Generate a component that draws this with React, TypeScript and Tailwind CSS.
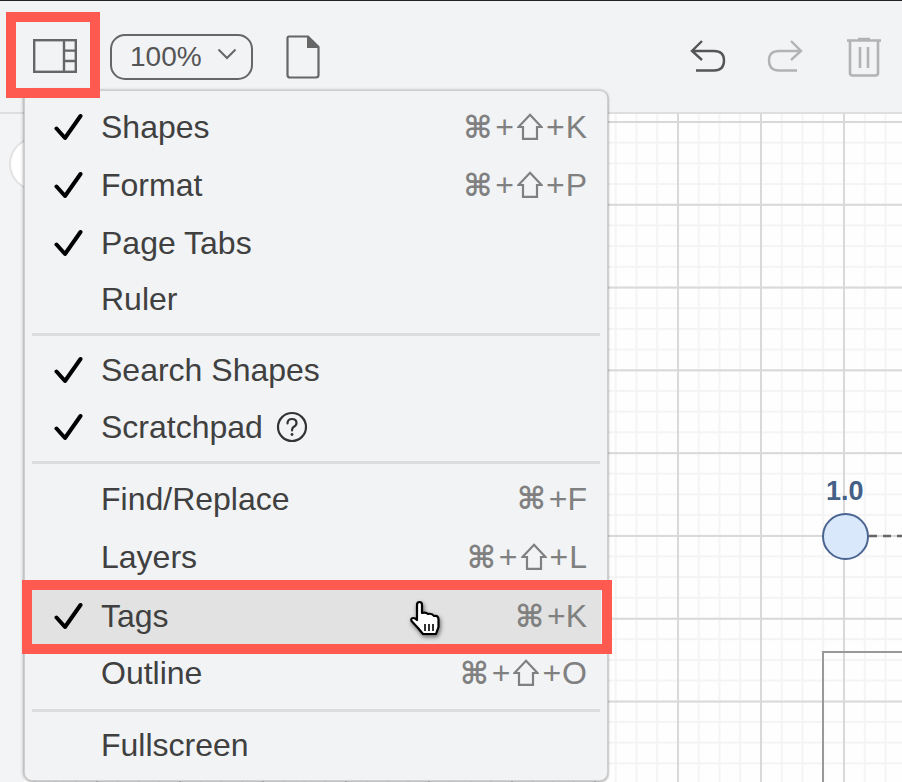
const Shift = () => (
  <svg width="26" height="27" viewBox="0 0 26 27" className="inline-block mx-[3px] -mt-[2px]" fill="none" stroke="#808080" strokeWidth="2.2" strokeLinejoin="miter">
    <path d="M13 1.8 L24.5 14 H20 V25.8 H6 V14 H1.5 Z" />
  </svg>
);

const Check = () => (
  <svg width="30" height="28" viewBox="0 0 30 28" fill="none" stroke="#000" strokeWidth="4" strokeLinecap="round" strokeLinejoin="round">
    <path d="M2.5 15.5 L11 25 L26.5 3" />
  </svg>
);

const Shortcut = ({ keys, shift }: { keys: string; shift?: boolean }) => (
  <span className="ml-auto flex items-center text-[#808080] text-[32px] leading-none">
    <span className="font-['DejaVu_Sans',sans-serif] text-[31px] font-bold">⌘</span>
    <span className="ml-[3px]">+</span>
    {shift && (
      <>
        <Shift />
        <span className="mr-px">+</span>
      </>
    )}
    <span>{keys}</span>
  </span>
);

const Row = ({
  label,
  checked,
  keys,
  shift,
  h,
  children,
}: {
  label: string;
  checked?: boolean;
  keys?: string;
  shift?: boolean;
  h: string;
  children?: React.ReactNode;
}) => (
  <div className={`flex items-center pl-[29px] pr-[20px] ${h}`}>
    <span className="w-[30px] h-7 shrink-0">{checked && <Check />}</span>
    <span className="ml-[17px] text-[32px] leading-none text-[#404040] whitespace-nowrap">{label}</span>
    {children}
    {keys && <Shortcut keys={keys} shift={shift} />}
  </div>
);

const Sep = ({ mt, mb }: { mt: string; mb: string }) => (
  <div className={`h-[3px] bg-[#dcdcdc] mx-[7px] ${mt} ${mb}`} />
);

export default function App() {
  return (
    <div className="relative w-[902px] h-[782px] overflow-hidden bg-white font-['Liberation_Sans',Arial,sans-serif]">
      <div className="h-px bg-[#222]" />
      {/* toolbar */}
      <div className="h-[113px] bg-[#f1f3f5] border-b-2 border-[#dedede] flex items-start">
        <svg width="44" height="34" viewBox="0 0 44 34" className="ml-[33px] mt-[38px] shrink-0" fill="none" stroke="#666" strokeWidth="2.4">
          <rect x="1.2" y="1.2" width="41.6" height="31.6" />
          <path d="M31 1.2 V32.8 M31 11.6 H42.8 M31 22 H42.8" />
        </svg>
        <div className="ml-[33px] mt-[33px] w-[143px] h-[46px] rounded-[15px] border-2 border-[#666] flex items-center pl-[18px] text-[28px] leading-none text-[#555]">
          100%
          <svg width="20" height="12" viewBox="0 0 20 12" className="ml-[15px] -mt-[6px]" fill="none" stroke="#666" strokeWidth="2">
            <path d="M1.5 1.5 L10 10 L18.5 1.5" />
          </svg>
        </div>
        <svg width="34" height="44" viewBox="0 0 34 44" className="ml-[33px] mt-[34px] shrink-0" fill="none">
          <path d="M3 1.5 H22 L32.5 12 V40 Q32.5 42.5 30 42.5 H4 Q1.5 42.5 1.5 40 V3 Q1.5 1.5 3 1.5 Z" stroke="#666" strokeWidth="2.2" />
          <path d="M21 1 L33 13 H21 Z" fill="#666" />
        </svg>
        <svg width="36" height="33" viewBox="0 0 36 33" className="ml-auto mt-[38px] shrink-0" fill="none" stroke="#555" strokeWidth="2.4">
          <path d="M12 2 L2 12 L12 21 M2 12 H24 Q34 12 34 21.5 Q34 31.5 24 31.5 H6" />
        </svg>
        <svg width="36" height="33" viewBox="0 0 36 33" className="ml-[41px] mt-[38px] shrink-0" fill="none" stroke="#b3b3b3" strokeWidth="2.4">
          <path d="M24 2 L34 12 L24 21 M34 12 H12 Q2 12 2 21.5 Q2 31.5 12 31.5 H30" />
        </svg>
        <svg width="36" height="40" viewBox="0 0 36 40" className="ml-[43px] mr-[20px] mt-[36px] shrink-0" fill="none" stroke="#b3b3b3" strokeWidth="2.6">
          <path d="M1 3.5 H35 M12 2 H24" />
          <path d="M4 3.5 V36 Q4 38.5 6.5 38.5 H29.5 Q32 38.5 32 36 V3.5" />
          <path d="M14 10 V31 M22 10 V31" />
        </svg>
      </div>
      {/* canvas */}
      <div className="relative h-[668px] bg-[#fefefe]">
        <div className="absolute inset-0 bg-[linear-gradient(#d9d9d9_2px,transparent_2px),linear-gradient(90deg,#d9d9d9_2px,transparent_2px),linear-gradient(#f4f4f4_2px,transparent_2px),linear-gradient(90deg,#f4f4f4_2px,transparent_2px)] bg-[size:82.8px_82.8px,83px_83px,20.7px_20.7px,20.75px_20.75px] [background-position:0_7px,13px_0,0_7px,13px_0]" />
        <div className="absolute left-0 top-0 w-6 h-[668px] bg-[#f3f4f6]" />
        <div className="absolute left-[9px] top-[23px] w-[54px] h-[54px] rounded-full bg-white border-2 border-[#e2e2e2]" />
        {/* diagram */}
        <div className="absolute left-[826px] top-[364px] text-[27px] leading-none font-bold text-[#456087]">1.0</div>
        <div className="absolute left-[822px] top-[399px] w-[47px] h-[47px] rounded-full bg-[#dae8fc] border-2 border-[#4a6591]" />
        <svg width="33" height="4" className="absolute left-[869px] top-[420px]">
          <line x1="0" y1="2" x2="33" y2="2" stroke="#666" strokeWidth="2.4" strokeDasharray="8 6" />
        </svg>
        <div className="absolute left-[822px] top-[537px] w-[90px] h-[140px] border-2 border-[#999]" />
      </div>

      {/* menu */}
      <div className="absolute left-[24px] top-[90px] w-[584px] h-[691px] bg-[#f1f3f5] rounded-[8px] border border-[#cfcfcf] shadow-[-1px_0_3px_rgba(0,0,0,0.3),1px_1px_2px_rgba(0,0,0,0.2)] pt-[7px]">
        <Row h="h-[58px]" label="Shapes" checked keys="K" shift />
        <Row h="h-[58px]" label="Format" checked keys="P" shift />
        <Row h="h-[57px]" label="Page Tabs" checked />
        <Row h="h-[56px]" label="Ruler" />
        <Sep mt="mt-[6px]" mb="mb-[6px]" />
        <Row h="h-[56px]" label="Search Shapes" checked />
        <Row h="h-[58px]" label="Scratchpad" checked>
          <svg width="32" height="32" viewBox="0 0 32 32" className="ml-[13px]" fill="none" stroke="#333" strokeWidth="2.2">
            <circle cx="16" cy="16" r="14" />
            <path d="M11.5 12.5 Q11.5 8 16 8 Q20.5 8 20.5 12 Q20.5 14.5 17.5 16 Q16 17 16 19.5" strokeLinecap="round" />
            <circle cx="16" cy="23.5" r="1.4" fill="#333" stroke="none" />
          </svg>
        </Row>
        <Sep mt="mt-[5px]" mb="mb-[6px]" />
        <Row h="h-[57px]" label="Find/Replace" keys="F" />
        <Row h="h-[60px]" label="Layers" keys="L" shift />
        <div className="h-[58px] ml-[7px] mr-[6px] bg-[#e2e2e2] flex items-center pl-[22px] pr-[14px]">
          <span className="w-[30px] h-7 shrink-0"><Check /></span>
          <span className="ml-[17px] text-[32px] leading-none text-[#404040]">Tags</span>
          <Shortcut keys="K" />
        </div>
        <Row h="h-[56px]" label="Outline" keys="O" shift />
        <Sep mt="mt-[8px]" mb="mb-[5px]" />
        <Row h="h-[56px]" label="Fullscreen" />
      </div>

      {/* annotation boxes */}
      <div className="absolute left-[6px] top-[12px] w-[94px] h-[86px] border-[10px] border-[#ff5a4f]" />
      <div className="absolute left-[22px] top-[580px] w-[590px] h-[74px] border-[10px] border-[#ff5a4f]" />

      {/* cursor */}
      <svg width="34" height="38" viewBox="0 0 34 38" className="absolute left-[409px] top-[600px] drop-shadow-[1px_2px_2px_rgba(0,0,0,0.55)]" fill="#fff" stroke="#000" strokeWidth="2.2" strokeLinejoin="round">
        <path d="M8 19 V5 Q8 2 10.5 2 Q13 2 13 5 V13 Q17 12 19 14 Q23 13 25 16 Q29 15 29.5 19 V27 L27 34 H14 L9 28 L2.5 21 Q1.5 18 4.5 18 Q6 18 8 20 Z" />
        <path d="M16 24 V31 M20 24 V31 M24 24 V31" fill="none" strokeWidth="1.6" />
      </svg>
    </div>
  );
}
